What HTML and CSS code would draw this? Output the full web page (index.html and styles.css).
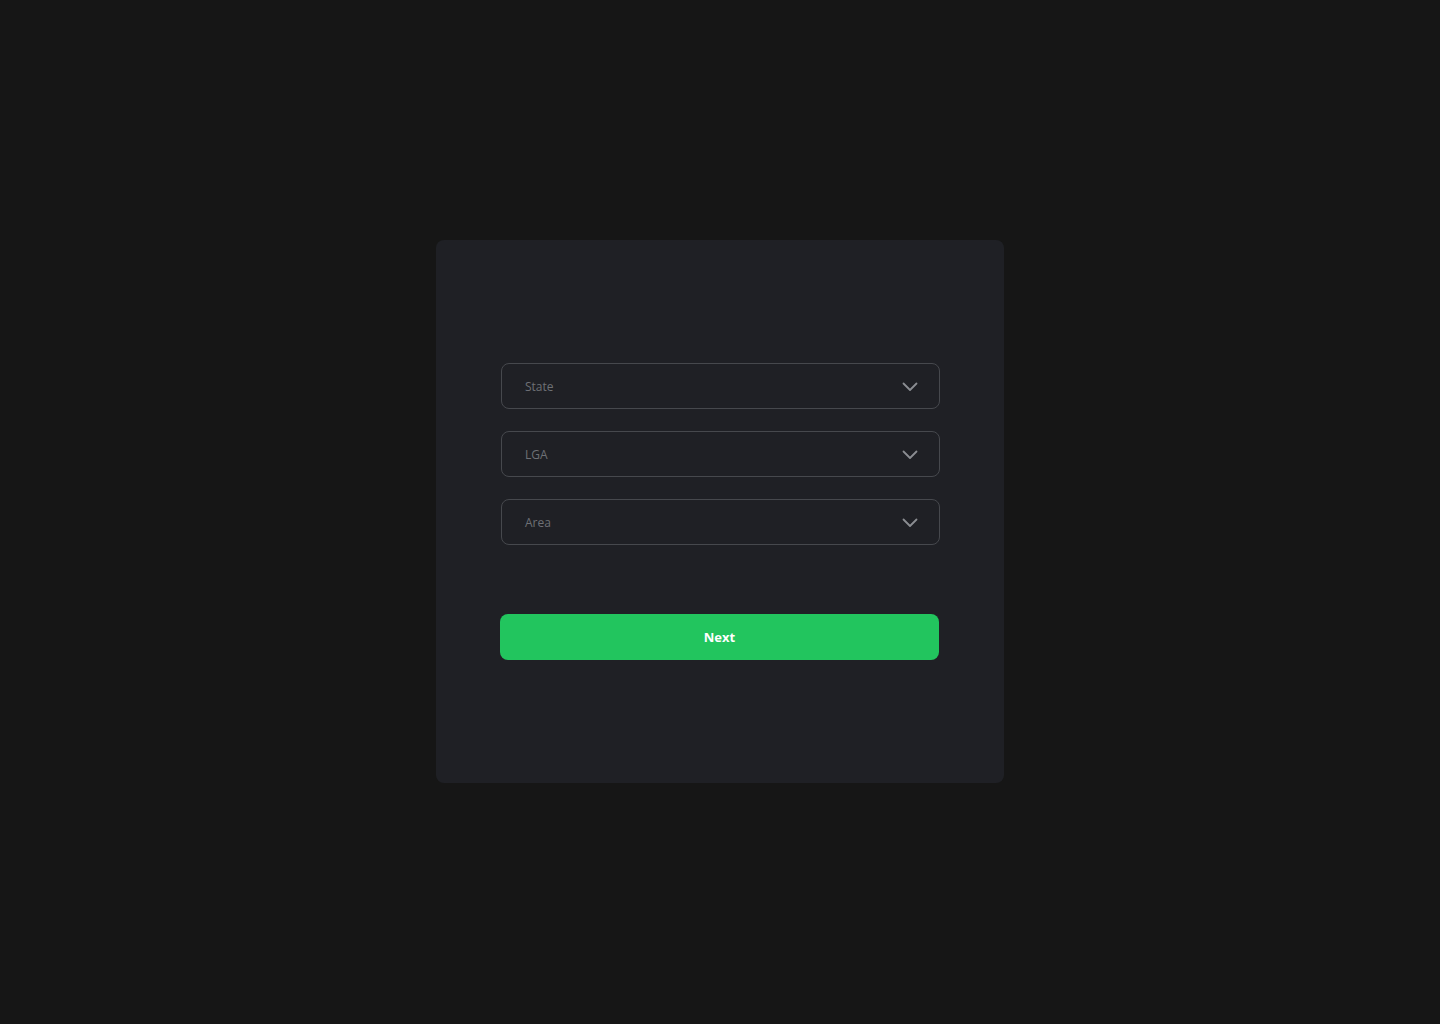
FILE: index.html
```html
<!DOCTYPE html>
<html>
<head>
<meta charset="utf-8">
<link rel="stylesheet" href="styles.css">
</head>
<body>
<div class="page">
  <div class="card">
    <div class="fields">
      <div class="select"><span>State</span><svg class="chev" width="16" height="10" viewBox="0 0 16 10"><path d="M1.5 1.5 L8 8 L14.5 1.5" fill="none" stroke="#8b8d92" stroke-width="1.8" stroke-linecap="round" stroke-linejoin="round"/></svg></div>
      <div class="select"><span>LGA</span><svg class="chev" width="16" height="10" viewBox="0 0 16 10"><path d="M1.5 1.5 L8 8 L14.5 1.5" fill="none" stroke="#8b8d92" stroke-width="1.8" stroke-linecap="round" stroke-linejoin="round"/></svg></div>
      <div class="select"><span>Area</span><svg class="chev" width="16" height="10" viewBox="0 0 16 10"><path d="M1.5 1.5 L8 8 L14.5 1.5" fill="none" stroke="#8b8d92" stroke-width="1.8" stroke-linecap="round" stroke-linejoin="round"/></svg></div>
    </div>
    <button class="next">Next</button>
  </div>
</div>
</body>
</html>
```

FILE: styles.css
```css
* { box-sizing: border-box; }
html, body { margin: 0; padding: 0; background: #161616; }
body { font-family: "Open Sans", "Noto Sans", sans-serif; }
.page {
  width: 1440px;
  height: 1024px;
  display: flex;
  justify-content: center;
  padding-top: 240px;
}
.card {
  width: 568px;
  height: 543px;
  background: #1f2025;
  border-radius: 8px;
  padding: 123px 64px 0 64px;
  display: flex;
  flex-direction: column;
}
.fields {
  display: flex;
  flex-direction: column;
  gap: 22px;
  margin-left: 1px;
}
.select {
  height: 46px;
  border: 1px solid #46484d;
  border-radius: 8px;
  display: flex;
  align-items: center;
  justify-content: space-between;
  padding: 2px 21px 0 23px;
  color: #6e7075;
  font-size: 12px;
}
.select span { line-height: 1; }
.chev { display: block; }
.next {
  margin-top: 69px;
  width: 439px;
  height: 46px;
  border: none;
  border-radius: 8px;
  background: #22c55e;
  color: #ffffff;
  font-family: "Open Sans", "Noto Sans", sans-serif;
  font-weight: 700;
  font-size: 13px;
  padding: 0;
}
```
